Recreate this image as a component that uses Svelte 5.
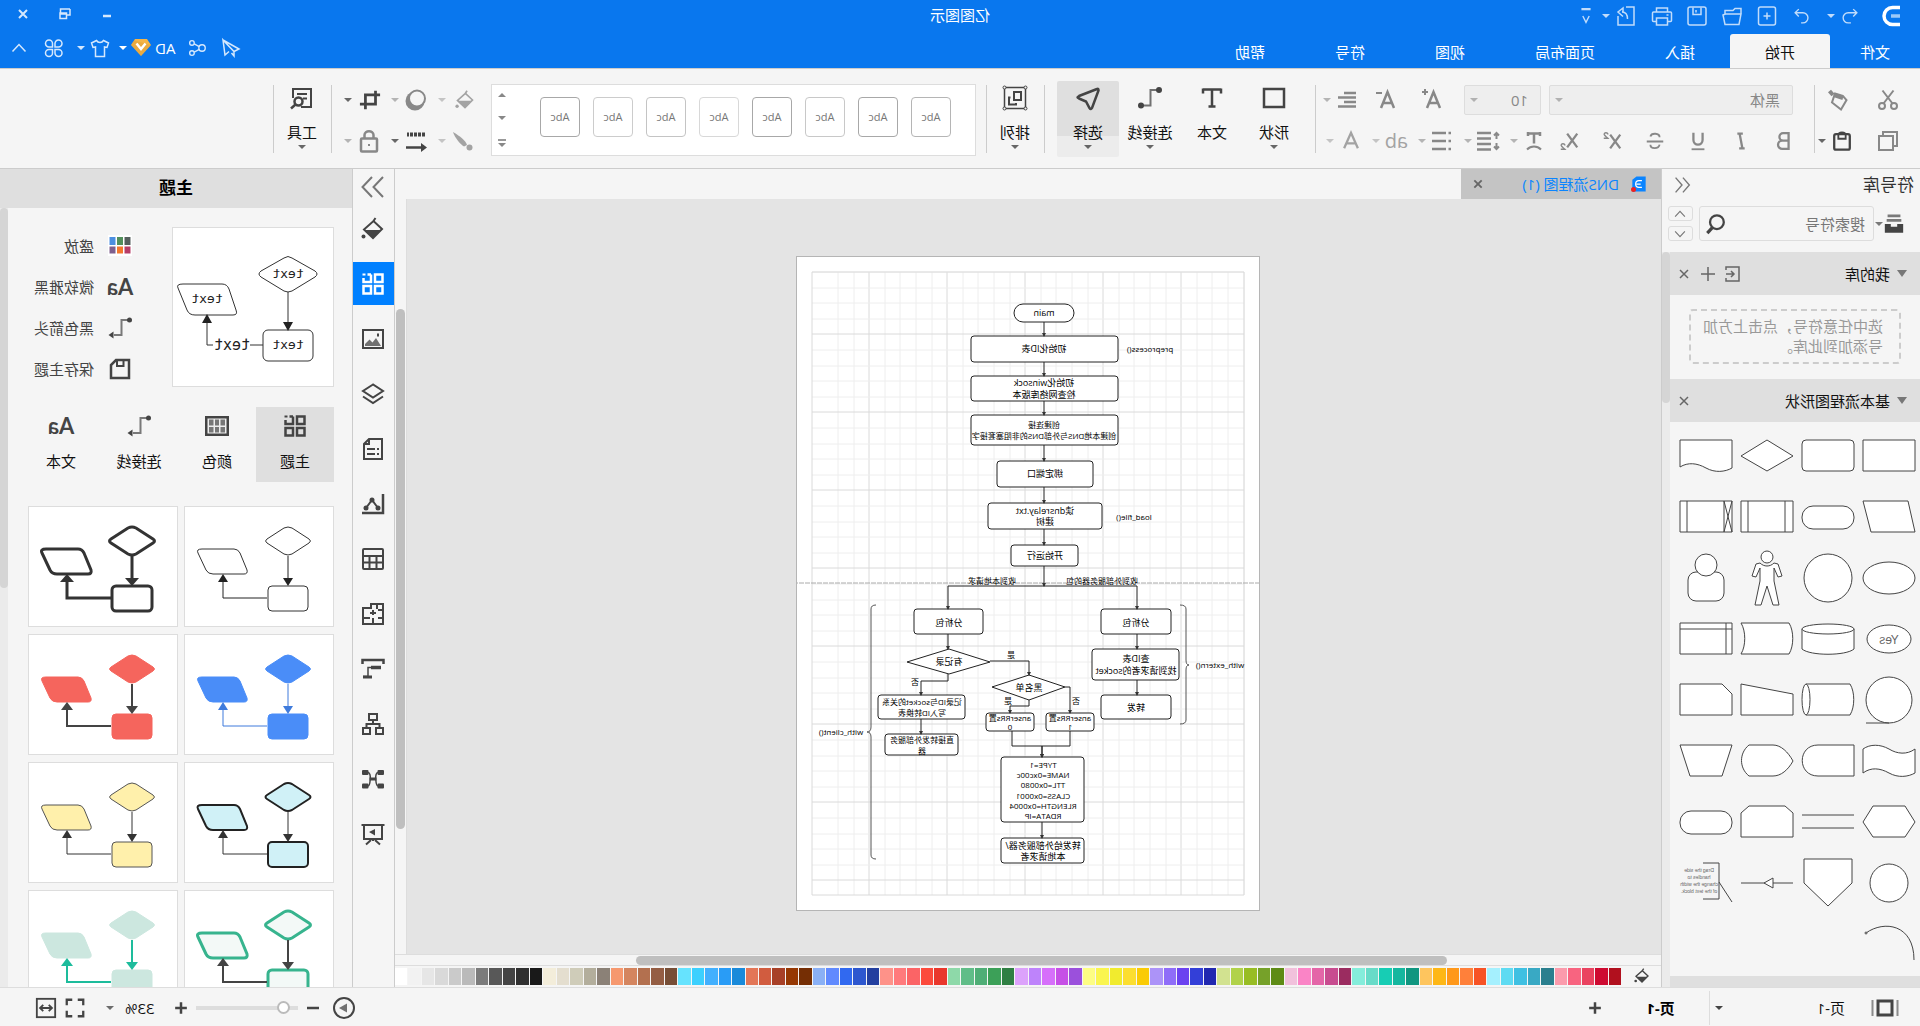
<script>
  const icons = {
    logo: '<path d="M20 3.5h-7.500a8.500 8.500 0 0 0 0 17H20" transform="matrix(-1 0 0 1 24 0)" stroke-width="3.500"/><path d="M4 12h9" stroke-width="3.500" opacity=".6"/>',
    undo: '<path d="M8.500 4.500 4.500 8.500l4 4M4.500 8.500H14a5.500 5.500 0 0 1 0 11h-3"/>',
    redo: '<path d="M15.500 4.500l4 4-4 4M19.500 8.500H11a5.500 5.500 0 0 0 0 11h2"/>',
    new: '<rect x="3.500" y="3" width="17" height="18" rx="2"/><path d="M12 8.500v7M8.500 12h7"/>',
    folder: '<path d="M3 10V4.500h6l2 2h8V10M3 10h15.500l2.500 1-2 9.500H5z"/>',
    save: '<rect x="3" y="3" width="18" height="18" rx="2"/><path d="M8 3.500v7h8v-7M13 6v2.500"/>',
    print: '<path d="M6.500 8V4h11v4M6 17.500H3.500a1 1 0 0 1-1-1V9a1 1 0 0 1 1-1h17a1 1 0 0 1 1 1v7.500a1 1 0 0 1-1 1H18M6.500 14h11v7h-11zM5.500 11h2"/>',
    export: '<path d="M12 3H4v18h16v-9M15 7.500V4l5 4-5 4.500M16 8c-4 0-5.500 3-5.500 7"/>',
    more: '<path d="M7 4.500h10" stroke-width="2.500"/><path d="m8.500 12 3.500 7 3.500-7"/>',
    send: '<path d="M20 4 4 13l5 2.500L20 4l-2 15-4-3.500M9 15.500V20l2.500-3"/>',
    share: '<circle cx="6.500" cy="12" r="3.500"/><circle cx="17.500" cy="6.500" r="2.500"/><circle cx="17.500" cy="17.500" r="2.500"/><path d="m9.500 10.500 5.500-3M9.500 13.500l5.500 3"/>',
    gem: '<path d="M6 3h12l4 6-10 11L2 9z" fill="#f5b547" stroke="none"/><path d="m2 9 10 11L22 9l-3-4.500z" fill="#d99a34" stroke="none" opacity=".4"/><path d="m7.500 7.500 4.500 5.500 4.500-5.500" stroke="#fff" stroke-width="2.500"/>',
    shirt: '<path d="M8.500 4.500 3.500 7l1.500 4.500 2.500-.500v9.500h9V11l2.500.500L20.500 7l-5-2.500c-1.500 2.500-5.500 2.500-7 0z"/>',
    apps: '<path d="M11 11H7.500A3.500 3.500 0 1 1 11 7.500zM13.500 11V7.500A3.500 3.500 0 1 1 17 11zM11 13.500V17a3.500 3.500 0 1 1-3.500-3.500zM13.500 13.500H17a3.500 3.500 0 1 1-3.500 3.500z"/>',
    up: '<path d="m5.500 15.500 6.500-7 6.500 7"/>',
    min: '<path d="M8 14h8" stroke-width="2.500"/>',
    restore: '<path d="M7 7h9.500v4M7 7v6h3.500M10.500 11H17v5.500h-6.500zM10.500 12H17" stroke-width="1.500"/>',
    close: '<path d="m8 8 8 8M16 8l-8 8"/>',
    cut: '<circle cx="6" cy="18" r="3"/><circle cx="18" cy="18" r="3"/><path d="M7.500 15.500 17.500 2.500M16.500 15.500 6.500 2.500"/>',
    painter: '<path d="m7 8 8-2.500 3 9-9 7L3.500 12z"/><path d="m17 7 3.500-4" stroke-width="4"/><path d="m7 10 9-3" stroke-width="4"/>',
    copy: '<path d="M6 17H3V3h14v3"/><rect x="7" y="7" width="14" height="14"/>',
    paste: '<rect x="3.500" y="4.500" width="17" height="17" rx="2" stroke-width="2.500"/><path d="M8 5.500c0-4 8-4 8 0v4H8z" stroke-width="2"/>',
    aplus: '<path d="m3 20 6.500-16L16 20M5.500 15h8" stroke-width="2.500"/><path d="M15 4h6M18 1v6" stroke-width="2"/>',
    aminus: '<path d="m3 20 6.500-16L16 20M5.500 15h8" stroke-width="2.500"/><path d="M15 5h6" stroke-width="2"/>',
    align: '<path d="M3 5h12M3 9.500h18M3 14h12M3 18.500h18" stroke-width="2.500"/>',
    b: '<path d="M7 3.500h6a4 4 0 0 1 0 8H7zM7 11.500h7a4.500 4.500 0 0 1 0 9H7z" stroke-width="2.500"/>',
    i: '<path d="M10 4h6M8 20h6M13.500 4l-3 16" stroke-width="2.500"/>',
    u: '<path d="M7 3v8a5 5 0 0 0 10 0V3" stroke-width="2.500"/><path d="M5 21h14"/>',
    s: '<path d="M17 7c-1-4-10-4-10 1M7 16c1 5 10 5 10 0M3 12.500h18"/>',
    sup: '<path d="m3 5 11 15M14 5 3 20" stroke-width="2.500"/><path d="M16.500 5c0-3 4.500-2.500 4 0-.500 1.500-2.500 2.500-4 4h4.500" stroke-width="1.500"/>',
    sub: '<path d="m3 4 11 15M14 4 3 19" stroke-width="2.500"/><path d="M16.500 17c0-3 4.500-2.500 4 0-.500 1.500-2.500 2.500-4 4h4.500" stroke-width="1.500"/>',
    tcurve: '<path d="M6 4.500h12M12 4.500v10M6 3v4M18 3v4" stroke-width="2.500"/><path d="M5 20.500c4-4 10-4 14 0"/>',
    spacing: '<path d="M3.500 4v6M3.500 14v6M1 6.500 3.500 4 6 6.500M1 17.500 3.500 20 6 17.500"/><path d="M9 4h14M9 9.500h14M9 15h14M9 20.500h14" stroke-width="2.500"/>',
    bullets: '<path d="M8 4h14M8 12h14M8 20h14M3 4h2.500M3 12h2.500M3 20h2.500" stroke-width="2.500"/>',
    acolor: '<path d="m4.500 20 7.500-17 7.500 17M7 14.500h10" stroke-width="2.500"/>',
    shape: '<rect x="2" y="3" width="20" height="18" stroke-width="2.500"/>',
    text: '<path d="M3 3.500h18M12 3.500v17M3 2.500v5M21 2.500v5M8.500 20.500h7" stroke-width="2.500"/>',
    connector: '<path d="M3 4h8.500v15.500H20" opacity=".75"/><circle cx="3" cy="4" r="3" fill="currentColor" stroke="none"/><circle cx="21" cy="19.500" r="3" fill="currentColor" stroke="none"/>',
    arrowconn: '<path d="M2 4h8.500v15H18" opacity=".7"/><circle cx="2.500" cy="4" r="2.500" fill="currentColor" stroke="none"/><path d="M18.500 15.500v7l5-3.500z" fill="currentColor" stroke="none"/>',
    select: '<path d="M3 3 21 10c2 1 2 1.500 0 2.500l-7 3-3.500 6.500c-1 1.500-2 1-2.500 0L1.500 4.500C1.500 3 2 2.500 3 3z" stroke-width="2.500"/>',
    arrange: '<rect x="1.500" y="1.500" width="21" height="21" stroke-width="1.500"/><path d="M6 6h7v8H6zM16.500 11.500h1.500v7h-7v-1.500" stroke-width="2"/><g fill="#f5f5f5" stroke-width="1"><circle cx="1.500" cy="1.500" r="1.500"/><circle cx="22.500" cy="1.500" r="1.500"/><circle cx="1.500" cy="22.500" r="1.500"/><circle cx="22.500" cy="22.500" r="1.500"/></g>',
    bucket: '<path d="m3 12 8.500-8L21 12.500 12 21z" stroke-width="2"/><path d="M4 13h16.500L12 21z" fill="currentColor" stroke="none"/><path d="m11.500 4-2-3" stroke-width="2"/><circle cx="21.500" cy="19.500" r="2" fill="currentColor" stroke="none"/>',
    shadow: '<circle cx="13" cy="13" r="9.500" fill="currentColor" stroke="none"/><circle cx="11" cy="10.500" r="8" fill="#f5f5f5"/>',
    crop: '<path d="M6 2v14.500h17M1 6.500h16V22" stroke-width="3"/>',
    brush: '<path d="M22 3C15 7 9 12 8 16l3 1.500C15 15 20 9 22 3z" fill="currentColor" stroke="none"/><circle cx="5.500" cy="18.500" r="3" fill="currentColor" stroke="none"/>',
    linestyle: '<path d="M3 5.500h18" stroke-width="4" stroke-dasharray="3 1"/><path d="M5 18.500h17" stroke-width="2.500"/><path d="M7 14v9l-6-4.500z" fill="currentColor" stroke="none"/>',
    lock: '<rect x="4" y="9.500" width="16" height="13" rx="1" stroke-width="2.500"/><path d="M7.500 9V6c0-5 9-5 9 0v3" stroke-width="2.500"/><path d="M11 16h2"/>',
    tools: '<path d="M13 21H3V3h18v9M7 8h10M7 12.500h4" stroke-width="2"/><circle cx="15.500" cy="15.500" r="4" fill="#f5f5f5" stroke-width="2.500"/><path d="m18.500 18.500 4.500 4" stroke-width="2.500"/>',
    dbl: '<path d="M11 4 4 12l7 8M19 4l-7 8 7 8"/>',
    dblr: '<path d="m2 2 9.500 10L2 22M13 2l9.500 10L13 22" stroke-width="2"/>',
    lib: '<path d="M5 3h14M4 8h16" stroke-width="3" opacity=".7"/><path d="M2 12h6.500v3h7v-3H22v9.500H2z" fill="currentColor" stroke="none"/>',
    search: '<circle cx="11" cy="10" r="7.500" stroke-width="2.500"/><path d="m16 16 5.500 6" stroke-width="3.500"/>',
    import: '<path d="M18 8V5H5v14h13v-3M18 12h-8M13 9l-3 3 3 3" stroke-width="1.500"/>',
    plus: '<path d="M5 12h14M12 5v14"/>',
    themes: '<path d="M2.500 2.500H10V10H2.500zM14 2.500h3.500M14 2.500V10h7.500V6M2.500 14H10v7.500H2.500zM14 14h7.500v7.500H14z" stroke-width="2.500"/><path d="M19.500 2.500h3" stroke-width="2"/>',
    image: '<rect x="2" y="3" width="20" height="18"/><path d="m4 19 5-8 3.500 4.500 3-3L20 17v2z" fill="currentColor" stroke="none" opacity=".75"/><path d="M7 6.500v3" stroke-width="2"/>',
    layers: '<path d="m12 2.500 10 6.500-10 6.500L2 9zM2 14.500l10 6.500 10-6.500"/>',
    doc: '<path d="M3 2h13l5 5v15H3z"/><path d="M16 2v5h5" stroke-width="2"/><path d="M6 12h2M6 17h2M10 12h8M10 17h8" stroke-width="2"/>',
    chart: '<path d="M2 2v19h21" stroke-width="2.500"/><path d="m7 16 6-8 6 8"/><g fill="currentColor" stroke="none"><circle cx="7" cy="16" r="2.500"/><circle cx="13" cy="8" r="2.500"/><circle cx="19" cy="16" r="2.500"/></g>',
    table: '<rect x="2" y="2" width="20" height="20" rx="1"/><path d="M2 9h20M2 15.500h20M8.500 9v13M15.500 9v13"/>',
    floor: '<path d="M2 2h12v4h8v16H2zM2 8h5M8 2v5M12 22v-6M2 16h5M12 8v5M9 11h6M15 16h7"/>',
    gantt: '<path d="M1.500 7V3h21v4" stroke-width="2.500"/><path d="M4 10.500h10" stroke-width="3.500"/><path d="M14 10.500h3v9h5" stroke-width="1.500"/><path d="M12 20h10" stroke-width="3" stroke-dasharray="0 1 9"/>',
    org: '<path d="M8 2h8v6H8zM2 16h7v6H2zM15 16h7v6h-7zM12 8v4M5.500 15v-3h13v3"/>',
    mind: '<g fill="currentColor" stroke="none"><rect x="1" y="3" width="6.500" height="5" rx="1"/><rect x="16.500" y="3" width="6.500" height="5" rx="1"/><rect x="1" y="16.500" width="6.500" height="5" rx="1"/><rect x="16.500" y="16.500" width="6.500" height="5" rx="1"/></g><path d="M7 5.500c4 0 2 13.500 0 13.500M17 5.500c-4 0-2 13.500 0 13.500" stroke-width="1.500"/><path d="M8.500 12h7" stroke-width="3"/>',
    present: '<path d="M.500 3h23M3 3v14h18V3M12 17v2M10 18l-5 4.500M14 18l5 4.500"/><path d="M10 7v6.500l6-3.500z" fill="currentColor" stroke="none"/>',
    swatches: '<path d="M0 1h24v21H0z" fill="#fff" stroke="none"/><g stroke="none"><path d="M1.500 3h6v8h-6z" fill="#555f5d"/><path d="M9 3h6v8H9z" fill="#528f5b"/><path d="M16.500 3h6v8h-6z" fill="#4c8fe0"/><path d="M1.500 12.500h6v7h-6z" fill="#b73d66"/><path d="M9 12.500h6v7H9z" fill="#f4772c"/><path d="M16.500 12.500h6v7h-6z" fill="#7f5f8d"/></g>',
    disk: '<path d="M3 3h13l5 5v13H3z" stroke-width="2.500"/><path d="M8.500 3v6H15V3"/>',
    colors: '<rect x="0" y="2" width="24" height="20" fill="currentColor" stroke="none"/><path d="M2.500 4.500h19v15h-19z" fill="#eee" stroke="none"/><path d="M4 5.500h4.500v6H4zM10 5.500h4v6h-4zM15.500 5.500H20v6h-4.500zM4 13h4.500v5.500H4zM10 13h4v5.500h-4zM15.500 13H20v5.500h-4.500z" fill="#777" stroke="none"/>',
    pages: '<path d="M5 5h14v14H5z" stroke-width="3"/><path d="M-.500 4v16M24.500 4v16" stroke-width="2" opacity=".6"/>',
    play: '<circle cx="12" cy="12" r="10"/><path d="m9 7.500 8 4.500-8 4.500z" fill="currentColor" stroke="none" opacity=".75"/>',
    minus: '<path d="M6 12h12" stroke-width="2.500"/>',
    fullscreen: '<path d="M3 9V3h6M15 3h6v6M21 15v6h-6M9 21H3v-6" stroke-width="2.500"/>',
    fit: '<rect x="2" y="2" width="20" height="20"/><path d="M7 12h10M9 8.500 5.500 12 9 15.500M15 8.500l3.500 3.500-3.500 3.500" stroke-width="2"/>',
    docfile: '<path d="M4 3h11l5 4v14H4z" fill="#0a84ff" stroke="none"/><path d="M15.500 8H12a4 4 0 0 0 0 8h3.500M9 12h5" stroke="#fff" stroke-width="1.500" transform="matrix(-1 0 0 1 24 0)"/>'
  };

  const menus = ['文件', '开始', '插入', '页面布局', '视图', '符号', '帮助'];
  const formatRow = [['b', '加粗'], ['i', '斜体'], ['u', '下划线'], ['s', '删除线'], ['sup', '上标'], ['sub', '下标']];
  const formatDrops = [['tcurve', '文字弧形'], ['spacing', '行距'], ['bullets', '项目符号']];
  const insertTools = [['shape', '形状', true], ['text', '文本', false], ['connector', '连接线', true], ['select', '选择', true]];
  const styleTones = ['#b5b5b5', '#a8a8a8', '#c8c8c8', '#a8a8a8', '#d8d8d8', '#c4c4c4', '#cccccc', '#a8a8a8'];
  const rail = ['bucket', 'themes', 'image', 'layers', 'doc', 'chart', 'table', 'floor', 'gantt', 'org', 'mind', 'present'];
  const railNames = ['填充', '主题', '图片', '图层', '页面', '图表', '表格', '平面图', '甘特图', '组织结构', '思维导图', '演示'];

  const palette = ('B1101E CE0A31 EA4360 F86480 FB9BAC 2A7F8E 39A9C4 3FC0E2 5FDBF2 A5F0FE F75325 FF803A FF981A FEB716 FEC55E ' +
    '109680 15B79F 17CDB4 68DBC8 85EDDB 9B2C60 C84C90 E466A8 FA84C6 F1C1DC 5E8B15 76A129 98BD24 B1D24A D2E290 ' +
    '2128B0 333FD8 6B42F0 8F6DF8 AC93F8 FACB05 FCDE30 F1EB2E FAF54F FDFD84 9B50DC C64FE6 D66FFA BE83FB DCA2FB ' +
    '2F7F43 3CA058 4FAE76 60BD88 8ED9A9 E9372C FC4A3C FB6466 FF7A7C FE9289 233F9F 2D57CF 3169F0 618AFE 8AB0F5 ' +
    '752E04 963803 A84027 D15C3F E37657 198ADA 299CF6 42B0FE 3CD0FE 66E3FE 774E36 945D43 B3704F D4855F F6986E ' +
    '8B8177 B3AE9C CFCCB9 E4DECF F3EDDA 191919 303030 444444 585858 7B7B7B BABABA CACACA D9D9D9 E6E6E6 F2F2F2 FFFFFF').split(' ');

  const symbols = [
    '<path d="M-26-16h52v31h-52z"/>',
    '<rect x="-26" y="-16" width="52" height="31" rx="4"/>',
    '<path d="M-26 0 0-16 26 0 0 15z"/>',
    '<path d="M-26-16h52v27c-8-5-17-4-26 1-9 5-19 4-26 0z"/>',
    '<path d="M-19-16h45l-8 31h-44z"/>',
    '<rect x="-26" y="-11" width="52" height="23" rx="11"/>',
    '<path d="M-26-16h52v31h-52zM-18-16v31M19-16v31"/>',
    '<path d="M-26-16h52v31h-52zM-18-16v31M19-16v31M-26-16l8 31M-18-16l-8 31"/>',
    '<ellipse rx="26" ry="16"/>',
    '<circle r="24"/>',
    '<circle cy="-21" r="6"/><path d="M-7-15c4 4 10 4 14 0l4 1 4 12-4 1-4-9 0 13 5 24h-6L0 8l-6 19h-6l5-24v-13l-4 9-4-1 4-12z"/>',
    '<rect x="-18" y="-6" width="36" height="29" rx="8"/><circle cy="-13" r="11"/>',
    '<ellipse rx="22" ry="14"/><text y="5" font-size="12">Yes</text>',
    '<path d="M-26-10v20c8 7 44 7 52 0v-20"/><ellipse cy="-10" rx="26" ry="5"/>',
    '<path d="M-22-16h48c-5 8-5 23 0 31h-48c-5-8-5-23 0-31z"/>',
    '<path d="M-26-16h52v31h-52zM-20-16v31M-26-10h52"/>',
    '<circle r="23"/><path d="M0 23h23"/>',
    '<path d="M22-16h-44c-5 8-5 23 0 31h44"/><ellipse cx="22" cy="-.500" rx="4" ry="15.500"/>',
    '<path d="M-26-6 26-16v31h-52z"/>',
    '<path d="M-16-16h42v31h-52V-6z"/>',
    '<path d="M-26-12c8 6 18 5 26 0 9-5 19-5 26 0v24c-8-6-17-5-26 0-9 5-19 4-26 0z"/>',
    '<path d="M-26-16H10c21 0 21 31 0 31h-36z"/>',
    '<path d="M-26 0c5-9 12-16 20-16h24c10 8 10 23 0 31H-6c-8 0-15-6-20-15z"/>',
    '<path d="M-26-16h52l-10 31h-32z"/>',
    '<path d="M-26 0l10-16h32L26 0 16 15h-32z"/>',
    '<path d="M-26-7h52M-26 6h52"/>',
    '<path d="M-18-16h36l8 7v24h-52V-9z"/>',
    '<rect x="-26" y="-11" width="52" height="23" rx="11"/>',
    '<circle r="19"/>',
    '<path d="M-24-24h48V0L0 23-24 0z"/>',
    '<path d="M-26 0h52"/><path d="M-6-5v10l9-5z"/>',
    '<path d="M3-20h-16v36H3M-13-1l-13 20" fill="none"/><text x="7" y="-11" font-size="5">Drag the side</text><text x="7" y="-4" font-size="5">handles to</text><text x="7" y="3" font-size="5">change the width</text><text x="7" y="10" font-size="5">of the text block.</text>',
    '<path d="M-25 16c0-36 30-40 48-27" fill="none"/><circle cx="23" cy="-11" r="1"/>'
  ];

  const themes = [
    { f: '#fff', s: '#333', w: 1, a: '#222', l: 1 },
    { f: '#fff', s: '#333', w: 3, a: '#333', l: 3 },
    { f: '#4a8df8', s: '#4a8df8', w: 1, a: '#3f7bdc', l: 1 },
    { f: '#f5655d', s: '#f5655d', w: 1, a: '#444', l: 2 },
    { f: '#d0f1f7', s: '#222', w: 2, a: '#333', l: 1 },
    { f: '#fff0ab', s: '#555', w: 1, a: '#333', l: 1 },
    { f: '#f3f9f7', s: '#37b48e', w: 3, a: '#444', l: 2 },
    { f: '#cce7df', s: '#cce7df', w: 1, a: '#1dbc9c', l: 2 }
  ];

  const gridX = Array.from({ length: 27 }, (_, k) => ({ p: Math.round(16.4 + 15.6 * k), major: k % 5 === 4 }));
  const gridY = Array.from({ length: 40 }, (_, k) => ({ p: Math.round(16 + 15.6 * k), major: k % 5 === 4 }));

  const boxes = [
    [142, 80, 147, 26], [142, 120, 147, 25], [142, 159, 147, 30], [167, 205, 96, 26], [158, 247, 114, 26], [182, 289, 67, 21],
    [277, 353, 69, 25], [89, 353, 70, 25], [81, 393, 87, 31], [89, 439, 70, 24], [295, 439, 87, 24], [302, 478, 73, 21],
    [226, 457, 48, 18], [166, 457, 48, 18], [176, 501, 83, 65], [176, 582, 83, 25]
  ];
  const arrows = [
    'M216 66V80', 'M216 106V120', 'M216 145V159', 'M216 189V205', 'M216 231V247', 'M216 273V289', 'M216 310V330',
    'M216 330H312V353', 'M216 330H123V353', 'M312 378V393', 'M123 378V393', 'M123 424V439',
    'M270 405H231V419', 'M312 418V425H339V439', 'M339 463V478', 'M231 444V450H250V457', 'M195 431H190V457',
    'M248 475V490H218V501', 'M190 475V490H218V501', 'M218 566V582'
  ];
  const labels = [
    [216, 57, 'main', 9], [216, 93, '初始化ID表', 9], [216, 127, '初始化winsock', 9], [216, 139, '检查网络库版本', 9],
    [216, 169, '创建连接', 8], [216, 180, '创建本地DNS与外部DNS的非阻塞套接字', 8], [215, 218, '绑定端口', 9],
    [215, 255, '读dnsrelay.txt', 9], [215, 266, '建树', 9], [215, 300, '开始运行', 9],
    [110, 93, 'preprocess()', 8], [126, 261, 'load_file()', 8],
    [268, 325, '收到本地请求', 8], [158, 325, '收到外部服务器的包', 8],
    [311, 367, '分析包', 9], [124, 367, '分析包', 9], [124, 403, '查ID表', 9], [124, 415, '找到请求者的socket', 9],
    [124, 452, '转发', 9], [40, 409, 'with_extern()', 8], [311, 406, '有记录', 9], [249, 399, '是', 8],
    [231, 432, '黑名单', 9], [345, 426, '否', 8], [338, 446, '记录ID与socket的关系', 8], [338, 457, '写入ID转换表', 8],
    [338, 484, '直接转发外部服务', 8], [338, 495, '器', 8], [419, 476, 'with_client()', 8],
    [252, 445, '是', 8], [184, 445, '否', 8], [250, 462, 'anserRRs置', 8], [250, 471, '0', 8],
    [190, 462, 'anserRRs置', 8], [190, 471, '1', 8],
    [217, 509, 'TYPE=1', 8], [217, 519, 'NAME=0xc00c', 8], [217, 529, 'TTL=0x0080', 8], [217, 540, 'CLASS=0x0001', 8],
    [217, 550, 'RLENGTH=0x0004', 8], [217, 560, 'RDATA=IP', 8],
    [217, 590, '转发给外部服务器/', 9], [217, 601, '本地请求者', 9]
  ];
</script>

{#snippet icon(name, size = 24)}
  <svg class="ic" viewBox="0 0 24 24" width={size} height={size} aria-hidden="true">{@html icons[name]}</svg>
{/snippet}

{#snippet sample(t)}
  <path d="M41 21q4-2 8 0l17 11q3 2 0 4L49 47q-4 2-8 0L24 36q-3-2 0-4z" fill={t.f} stroke={t.s} stroke-width={t.w} />
  <path d="M99 42h32q6 0 4 4l-8 17q-2 4-7 4H89q-4 0-3-4l7-17q2-4 6-4z" fill={t.f} stroke={t.s} stroke-width={t.w} />
  <rect x="25" y="79" width="40" height="25" rx="4" fill={t.f} stroke={t.s} stroke-width={t.w} />
  <path d="M45 49v24M66 91h44V72" fill="none" stroke={t.a} stroke-width={t.l} />
  <path d="M{41 - t.l} 71h{8 + 2 * t.l}l-{4 + t.l} 8zM{106 - t.l} 75h{8 + 2 * t.l}l-{4 + t.l}-8z" fill={t.a} />
{/snippet}

<div class="app">
  <header>
    <div class="titlebar">
      <div class="quick">
        <span class="logo">{@render icon('logo')}</span>
        <button class="qa first drop" aria-label="撤销">{@render icon('undo', 22)}<i class="caret"></i></button>
        <button class="qa" aria-label="重做">{@render icon('redo', 22)}</button>
        <button class="qa" aria-label="新建">{@render icon('new', 24)}</button>
        <button class="qa" aria-label="打开">{@render icon('folder', 24)}</button>
        <button class="qa" aria-label="保存">{@render icon('save', 24)}</button>
        <button class="qa" aria-label="打印">{@render icon('print', 24)}</button>
        <button class="qa drop" aria-label="导出">{@render icon('export', 24)}<i class="caret"></i></button>
        <button class="qa more" aria-label="更多">{@render icon('more', 22)}</button>
      </div>
      <h1>亿图图示</h1>
      <div class="win">
        <button aria-label="最小化">{@render icon('min')}</button>
        <button aria-label="还原">{@render icon('restore')}</button>
        <button class="bold" aria-label="关闭">{@render icon('close')}</button>
      </div>
    </div>
    <div class="menubar">
      <nav>
        {#each menus as m, n}
          <button class:active={n === 1} class:file={n === 0}>{m}</button>
        {/each}
      </nav>
      <div class="account">
        <button aria-label="发送">{@render icon('send')}</button>
        <button aria-label="分享">{@render icon('share', 22)}</button>
        <button class="user drop"><span>AD</span>{@render icon('gem')}<i class="caret"></i></button>
        <button class="drop" aria-label="皮肤">{@render icon('shirt')}<i class="caret"></i></button>
        <button aria-label="应用">{@render icon('apps', 24)}</button>
        <button aria-label="收起">{@render icon('up')}</button>
      </div>
    </div>
  </header>

  <div class="ribbon">
    <div class="group clip">
      <div class="row"><button class="tool" aria-label="剪切">{@render icon('cut')}</button><button class="tool paint" aria-label="格式刷">{@render icon('painter')}</button></div>
      <div class="row"><button class="tool" aria-label="复制">{@render icon('copy')}</button><button class="dd dark" aria-label="粘贴">{@render icon('paste', 22)}<i class="caret"></i></button></div>
    </div>
    <div class="group font">
      <div class="row pick">
        <label class="pickbox family"><select aria-label="字体"><option>黑体</option></select><i class="caret"></i></label>
        <label class="pickbox size"><select aria-label="字号"><option>10</option></select><i class="caret"></i></label>
        <button class="tool" aria-label="增大字号">{@render icon('aplus')}</button>
        <button class="tool wide" aria-label="减小字号">{@render icon('aminus')}</button>
        <button class="dd" aria-label="对齐">{@render icon('align')}<i class="caret"></i></button>
      </div>
      <div class="row">
        {#each formatRow as [n, t]}<button class="fmt" aria-label={t}>{@render icon(n, 22)}</button>{/each}
        {#each formatDrops as [n, t]}<button class="dd" aria-label={t}>{@render icon(n)}<i class="caret"></i></button>{/each}
        <button class="dd pale" aria-label="突出显示"><span class="ab">ab</span><i class="caret"></i></button>
        <button class="dd pale" aria-label="字体颜色">{@render icon('acolor', 22)}<i class="caret"></i></button>
      </div>
    </div>
    <div class="group big insert">
      {#each insertTools as [n, t, c]}
        <button class="bigtool" class:on={n === 'select'}>{@render icon(n)}<span>{t}</span>{#if c}<i class="caret"></i>{/if}</button>
      {/each}
    </div>
    <div class="group big one"><button class="bigtool">{@render icon('arrange')}<span>排列</span><i class="caret"></i></button></div>
    <div class="group styles">
      <div class="gallery">
        {#each styleTones as tone}<button class="style" style:border-color={tone}>Abc</button>{/each}
        <div class="gscroll"><button aria-label="上一行"><i class="caret flip"></i></button><button aria-label="下一行"><i class="caret"></i></button><button aria-label="全部样式" class="all"><i class="caret"></i></button></div>
      </div>
    </div>
    <div class="group effects">
      <div class="row"><button class="dd pale" aria-label="填充">{@render icon('bucket', 20)}<i class="caret"></i></button><button class="dd" aria-label="阴影">{@render icon('shadow')}<i class="caret"></i></button><button class="dd dark" aria-label="裁剪">{@render icon('crop', 22)}<i class="caret"></i></button></div>
      <div class="row"><button class="dd pale" aria-label="线条">{@render icon('brush')}<i class="caret"></i></button><button class="dd dark" aria-label="线型">{@render icon('linestyle')}<i class="caret"></i></button><button class="dd" aria-label="锁定">{@render icon('lock')}<i class="caret"></i></button></div>
    </div>
    <div class="group big one"><button class="bigtool">{@render icon('tools')}<span>工具</span><i class="caret"></i></button></div>
  </div>

  <main>
    <aside class="library">
      <div class="libhead"><h2>符号库</h2><button aria-label="收起符号库">{@render icon('dbl', 22)}</button></div>
      <div class="find">
        <button class="libbtn" aria-label="符号库菜单">{@render icon('lib', 22)}<i class="caret"></i></button>
        <div class="searchbox"><input type="text" aria-label="搜索符号" placeholder="搜索符号" /><button aria-label="搜索">{@render icon('search', 22)}</button></div>
        <div class="updown"><button aria-label="上">{@render icon('up', 18)}</button><button aria-label="下" class="down">{@render icon('up', 18)}</button></div>
      </div>
      <div class="libscroll">
        <div class="liblist">
          <div class="sect"><i class="tri"></i><h3>我的库</h3><button aria-label="导入">{@render icon('import')}</button><button aria-label="添加">{@render icon('plus')}</button><button aria-label="关闭我的库">{@render icon('close')}</button></div>
          <div class="hint"><p>选中任意符号，点击上方加号添加到此库。</p></div>
          <div class="sect"><i class="tri"></i><h3>基本流程图形状</h3><button aria-label="关闭形状">{@render icon('close')}</button></div>
          <div class="shapes">
            {#each symbols as s}<svg viewBox="-30 -30 61 61" width="61" height="61">{@html s}</svg>{/each}
          </div>
          <div class="sect last"></div>
        </div>
        <div class="track"><div class="thumb libthumb"></div></div>
      </div>
    </aside>

    <section class="work">
      <div class="doctabs"><div class="doctab">{@render icon('docfile', 20)}<i class="dot"></i><span>DNS流程图 (1)</span><button aria-label="关闭文档">{@render icon('close', 22)}</button></div></div>
      <div class="viewport">
        <div class="canvas">
          <svg class="page" viewBox="0 0 464 655" width="464" height="655">
            <defs><marker id="tip" viewBox="0 0 4 4" refX="3" refY="2" markerWidth="4" markerHeight="4" orient="auto"><path d="M0 0l4 2-4 2z" fill="#333" /></marker></defs>
            <g class="grid">
              {#each gridX as g}<path class:major={g.major} d="M{g.p} 16V639" />{/each}
              {#each gridY as g}<path class:major={g.major} d="M16 {g.p}H448" />{/each}
              <path class="major" d="M16 16H448V639H16z" />
            </g>
            <path d="M0 327H464" stroke="#aaa" stroke-dasharray="5 1" />
            <g class="nodes">
              <rect x="186" y="48" width="60" height="18" rx="9" />
              {#each boxes as [x, y, w, h]}<rect {x} {y} width={w} height={h} rx="3" />{/each}
              <path d="M270 406l41-13 42 13-42 12zM195 431l36-12 37 12-37 13z" />
            </g>
            <g class="links">{#each arrows as d}<path {d} marker-end="url(#tip)" />{/each}</g>
            <g class="braces"><path d="M80 349q-6 0-6 4v51q0 5-3 5 3 0 3 5v50q0 4 6 4M384 349q5 0 5 4v118q0 5 4 5-4 0-4 5v118q0 4-5 4" /></g>
            <g class="words">{#each labels as [x, y, t, z]}<text {x} y={y + 3} font-size={z}>{t}</text>{/each}</g>
          </svg>
        </div>
        <div class="vbar"><div class="vthumb"></div></div>
      </div>
      <div class="hbar"><div class="hthumb"></div></div>
      <div class="palette"><span class="pot">{@render icon('bucket', 16)}</span>{#each palette as c}<button aria-label={'#' + c} style:background={'#' + c}></button>{/each}</div>
    </section>

    <nav class="rail">
      <button class="fold" aria-label="收起面板">{@render icon('dblr')}</button>
      {#each rail as r, n}<button class:active={n === 1} aria-label={railNames[n]}><span>{@render icon(r)}</span></button>{/each}
    </nav>

    <aside class="theme">
      <h2>主题</h2>
      <div class="themescroll">
        <div class="themebody">
          <div class="current">
            <svg viewBox="0 0 162 160" width="162" height="160">
              <g fill="#fff" stroke="#333">
                <path d="M42 31q4-3 8 0l23 13q4 3 0 6L50 64q-4 2-8 0L19 50q-4-3 0-6z" />
                <path d="M112 57h39q7 0 5 4l-9 22q-2 5-8 5h-38q-5 0-3-5l7-21q2-5 7-5z" />
                <rect x="21" y="103" width="50" height="31" rx="5" />
                <path d="M46 65v31M71 118h13M121 118h6V95" fill="none" />
              </g>
              <path d="M41 95h10l-5 9zM122 96h10l-5-9z" fill="#222" />
              <text x="46" y="51" font-size="13">text</text><text x="127" y="76" font-size="13">text</text>
              <text x="46" y="122" font-size="13">text</text><text x="102" y="123" font-size="15">text</text>
            </svg>
            <ul>
              <li>{@render icon('swatches')}<span>盛放</span></li>
              <li><b class="aa">Aa</b><span>微软雅黑</span></li>
              <li>{@render icon('arrowconn')}<span>黑色箭头</span></li>
              <li>{@render icon('disk')}<span>保存主题</span></li>
            </ul>
          </div>
          <div class="kinds">
            <button class="on">{@render icon('themes')}<span>主题</span></button>
            <button>{@render icon('colors')}<span>颜色</span></button>
            <button>{@render icon('arrowconn')}<span>连接线</span></button>
            <button><b class="aa">Aa</b><span>文本</span></button>
          </div>
          <div class="cards">
            {#each themes as t, n}<button class="card" aria-label={'主题 ' + (n + 1)}><svg viewBox="0 0 148 119" width="148" height="119">{@render sample(t)}</svg></button>{/each}
          </div>
        </div>
        <div class="track"><div class="thumb themethumb"></div></div>
      </div>
    </aside>
  </main>

  <footer>
    <div class="pagepick"><button aria-label="页面列表">{@render icon('pages')}</button><label><select aria-label="页面"><option>页-1</option></select><i class="caret"></i></label></div>
    <button class="pagetab">页-1</button>
    <button class="addpage" aria-label="添加页面">{@render icon('plus', 20)}</button>
    <div class="zoom">
      <button aria-label="演示">{@render icon('play')}</button>
      <button aria-label="缩小">{@render icon('minus')}</button>
      <input type="range" min="0" max="100" value="8" aria-label="缩放" />
      <button aria-label="放大" class="thick">{@render icon('plus', 20)}</button>
      <button class="percent"><span>33%</span><i class="caret"></i></button>
      <button aria-label="全屏">{@render icon('fullscreen', 22)}</button>
      <button aria-label="适合宽度">{@render icon('fit', 22)}</button>
    </div>
  </footer>
</div>

<style>
  :global(body) { overflow: hidden; }
  .app { display: flex; flex-direction: column; height: 100vh; overflow: hidden; background: #f5f5f5; color: #333; font: 15px/20px "Open Sans", "Noto Sans CJK SC", sans-serif; transform: scaleX(-1); }
  .app :is(button, select, input) { font: inherit; color: inherit; border: 0; padding: 0; margin: 0; background: none; }
  .app :is(h1, h2, h3, p, ul) { margin: 0; padding: 0; font-size: 15px; font-weight: 400; list-style: none; }
  button { display: flex; align-items: center; justify-content: center; }
  select { appearance: none; outline: 0; }
  .ic { display: block; flex: none; fill: none; stroke: currentColor; stroke-width: 2; overflow: visible; }
  .caret { display: block; flex: none; width: 0; height: 0; border: 4px solid transparent; border-top: 4px solid currentColor; border-bottom: 0; }
  .caret.flip { border-top: 0; border-bottom: 4px solid currentColor; }

  header { background: #0977ee; color: #d5e8fd; flex: none; }
  header .ic { stroke-width: 1.5; }
  .titlebar { display: grid; grid-template-columns: 1fr auto 1fr; height: 34px; align-items: center; }
  .titlebar h1 { color: #fff; line-height: 30px; align-self: start; }
  .quick { display: flex; align-items: center; height: 32px; align-self: start; }
  .logo { color: #fff; padding-left: 16px; width: 36px; }
  .qa { width: 35px; height: 28px; opacity: .9; }
  .app .qa.drop { width: 36px; padding-left: 7px; justify-content: flex-start; gap: 4px; }
  .app .qa.first { width: 48px; }
  .app .more { width: 46px; }
  .win { display: flex; justify-content: flex-end; gap: 18px; padding-right: 11px; align-self: start; height: 27px; }
  .win .bold :global(svg) { stroke-width: 2; }
  .menubar { display: flex; justify-content: space-between; height: 34px; }
  .menubar nav { display: flex; color: #fff; }
  .app .menubar nav button { padding: 1px 35px 0; }
  .app .menubar nav .file { padding: 1px 30px 0; }
  .app .menubar nav .active { background: #f5f5f5; color: #111; border-radius: 3px 3px 0 0; }
  .account { display: flex; align-items: center; gap: 11px; padding: 0 7px 6px 0; }
  .account .drop { gap: 3px; }
  .app .account .user { color: #fff; gap: 2px; margin-right: -4px; }

  .ribbon { display: flex; flex: none; height: 99px; border-top: 1px solid #ccc; border-bottom: 1px solid #ccc; box-sizing: content-box; color: #888; }
  .group { position: relative; padding: 16px 0 0; display: flex; flex-direction: column; gap: 11px; box-sizing: border-box; flex: none; border: 0; }
  .group:not(.styles)::after { content: ""; position: absolute; right: 0; top: 16px; height: 68px; width: 1px; background: #ccc; }
  .row { display: flex; align-items: center; height: 30px; flex: none; }
  .clip { width: 106px; padding-left: 10px; }
  .clip .row { gap: 10px; }
  .tool { width: 44px; height: 28px; }
  .tool.wide { width: 48px; }
  .tool.paint { width: 36px; }
  .dd { width: 46px; height: 28px; }
  .app .dd { justify-content: space-between; padding: 0 8px 0 2px; }
  .app .clip .dd { width: 42px; padding: 0 4px 0 3px; }
  .dd .caret { opacity: .6; }
  .app .dd.dark { color: #444; }
  .dd.dark .caret { opacity: .8; }
  .app .dd.pale { color: #a3a3a3; }
  .font { width: 499px; padding-left: 8px; }
  .fmt { width: 43px; height: 28px; }
  .font .pick { padding-left: 13px; }
  .pickbox { display: flex; align-items: center; box-sizing: border-box; height: 30px; border: 1px solid #ddd; border-radius: 2px; background: #eee; padding: 0 5px 0 12px; }
  .app .pickbox select { flex: 1; min-width: 0; color: #888; }
  .pickbox .caret { opacity: .6; }
  .family { width: 244px; margin-right: 8px; }
  .size { width: 77px; margin-right: 11px; }
  .ab { font-size: 20px; line-height: 20px; }
  .big { flex-direction: row; color: #444; padding-top: 12px; gap: 0; }
  .insert { padding-left: 10px; padding-right: 13px; }
  .one { width: 58px; justify-content: center; }
  .app .bigtool { flex-direction: column; justify-content: flex-start; width: 62px; height: 76px; padding-top: 5px; border-radius: 2px; }
  .app .one .bigtool { width: 56px; }
  .bigtool span { color: #111; margin: 12px 0 3px; line-height: 20px; }
  .app .bigtool.on { background: linear-gradient(#dfdfdf 55px, #ececec 55px); }
  .bigtool .caret { opacity: .8; }
  .styles { padding: 15px 0 0 10px; }
  .gallery { display: flex; align-items: center; gap: 13px; box-sizing: border-box; width: 485px; height: 72px; border: 1px solid #ddd; background: #fff; padding-left: 24px; }
  .app .style { width: 40px; height: 40px; border: 1px solid; border-radius: 4px; font-size: 11px; color: #777; margin-top: -6px; }
  .gscroll { display: flex; flex-direction: column; justify-content: space-between; height: 54px; margin-left: 21px; }
  .app .all { border-top: 2px solid #999; padding-top: 2px; }
  .effects { width: 160px; padding-left: 14px; }
  .effects .dd { width: 47px; }

  main { display: flex; flex: 1; min-height: 0; }
  .library { width: 258px; flex: none; display: flex; flex-direction: column; border-right: 1px solid #ccc; }
  .libhead { display: flex; justify-content: space-between; align-items: center; height: 31px; padding: 0 9px 0 6px; flex: none; color: #777; }
  .library .ic { stroke-width: 1.5; }
  .app .libhead h2 { font-size: 17px; color: #333; }
  .find { display: flex; padding: 6px 6px 11px 13px; color: #444; flex: none; }
  .libbtn { gap: 0; width: 33px; }
  .libbtn .caret { opacity: .7; }
  .searchbox { display: flex; flex: 1; min-width: 0; height: 33px; border: 1px solid #ddd; border-radius: 3px; margin-right: 6px; padding: 0 5px 0 8px; }
  .searchbox input { flex: 1; min-width: 0; outline: 0; }
  .searchbox input::placeholder { color: #777; opacity: 1; }
  .updown { display: flex; flex-direction: column; justify-content: space-between; }
  .app .updown button { width: 25px; height: 15px; box-sizing: border-box; border: 1px solid #ddd; border-radius: 3px; color: #777; }
  .down .ic { rotate: 180deg; }
  .libscroll, .themescroll { display: flex; flex: 1; min-height: 0; }
  .liblist { flex: 1; min-width: 0; overflow: hidden; }
  .track { width: 8px; flex: none; background: #ebebeb; }
  .thumb { background: #d5d5d5; border-radius: 4px; }
  .libthumb { height: 151px; }
  .themethumb { height: 380px; }
  .sect { display: flex; align-items: center; height: 43px; background: #dfdfdf; color: #666; padding: 0 2px 0 13px; }
  .app .sect h3 { flex: 1; color: #111; padding-left: 7px; }
  .sect.last { margin-top: 1px; }
  .tri { border: 5px solid transparent; border-top: 7px solid #777; border-bottom: 0; }
  .hint { margin: 14px 19px 15px; border: 2px dashed #ccc; border-radius: 4px; padding: 5px 12px 6px 16px; color: #999; }
  .shapes { display: grid; grid-template-columns: repeat(4, 61px); padding: 4px 0 0 1px; }
  .shapes svg { fill: #fff; stroke: #444; stroke-width: 1; }
  .shapes :global(text) { fill: #666; stroke: none; text-anchor: middle; font-family: "Liberation Sans", sans-serif; }

  .work { flex: 1; min-width: 0; display: flex; flex-direction: column; }
  .doctabs { height: 30px; flex: none; display: flex; }
  .doctab { position: relative; display: flex; align-items: center; width: 200px; background: #c4c4c4; color: #0a84ff; padding: 0 6px 0 12px; box-sizing: border-box; gap: 10px; }
  .doctab span { flex: 1; white-space: nowrap; }
  .app .doctab button { color: #666; }
  .dot { position: absolute; left: 25px; top: 18px; width: 5px; height: 5px; border-radius: 50%; background: #e22; }
  .viewport { flex: 1; display: flex; min-height: 0; }
  .canvas { flex: 1; min-width: 0; display: flex; justify-content: center; align-items: flex-start; background: #e4e4e4; padding: 57px 0 0 12px; overflow: hidden; }
  .page { background: #fff; outline: 1px solid #b5b5b5; outline-offset: -1px; flex: none; }
  .grid { stroke: #eee; fill: none; }
  .grid .major { stroke: #dadada; }
  .nodes { fill: #fff; stroke: #222; }
  .links, .braces { fill: none; stroke: #222; }
  .braces { stroke: #555; }
  .words { fill: #000; text-anchor: middle; }
  .vbar { width: 12px; padding: 110px 1px 0; box-sizing: border-box; border-left: 1px solid #ddd; }
  .vthumb { height: 520px; background: #bfbfbf; border-radius: 5px; }
  .hbar { height: 12px; flex: none; box-sizing: border-box; border: 1px solid #ddd; border-width: 1px 0; padding: 1px 241px 0 214px; }
  .hthumb { height: 9px; background: #bfbfbf; border-radius: 5px; }
  .palette { display: flex; gap: 1px; height: 17px; padding: 2px 0; flex: none; }
  .palette button { flex: 1; min-width: 0; }
  .pot { width: 28px; padding-left: 11px; color: #444; }

  .rail { width: 41px; flex: none; display: flex; flex-direction: column; border: 1px solid #ccc; border-width: 0 1px; color: #444; }
  .rail button { height: 55px; flex: none; }
  .app .rail .fold { height: 33px; color: #777; padding-top: 2px; box-sizing: border-box; }
  .rail button span { display: flex; align-items: center; justify-content: center; width: 41px; height: 43px; margin-top: -2px; }
  .rail .active span { background: #0080ff; color: #fff; }

  .theme { width: 352px; flex: none; display: flex; flex-direction: column; min-height: 0; }
  .app .theme h2 { height: 39px; flex: none; background: #dfdfdf; color: #000; font-size: 17px; font-weight: 700; text-align: center; line-height: 38px; }
  .themebody { flex: 1; min-width: 0; padding: 19px 20px 0 18px; overflow: hidden; }
  .current { display: flex; color: #444; height: 160px; }
  .current > svg { background: #fff; outline: 1px solid #ddd; outline-offset: -1px; }
  .current text { font-family: "DejaVu Sans Mono", monospace; text-anchor: middle; fill: #222; }
  .app .current ul { padding-left: 40px; margin-top: -2px; }
  .current li { display: flex; align-items: center; gap: 14px; height: 41px; white-space: nowrap; }
  .aa { width: 24px; font: 700 22px/24px Lato, sans-serif; display: flex; justify-content: center; }
  .kinds { display: grid; grid-template-columns: repeat(4, 78px); margin: 20px 0 24px; color: #444; }
  .app .kinds button { flex-direction: column; height: 75px; gap: 13px; padding-bottom: 4px; box-sizing: border-box; }
  .app .kinds .on { background: #dfdfdf; }
  .kinds span { color: #111; }
  .cards { display: grid; grid-template-columns: repeat(2, 150px); gap: 7px 6px; }
  .app .card { border: 1px solid #ddd; background: #fff; }

  footer { display: flex; align-items: center; flex: none; height: 39px; border-top: 1px solid #ddd; color: #444; position: relative; z-index: 1; background: #f5f5f5; padding-top: 1px; box-sizing: border-box; }
  .pagepick { display: flex; align-items: center; width: 211px; height: 34px; border-right: 1px solid #ddd; box-sizing: border-box; padding: 0 5px 0 23px; gap: 28px; }
  .pagepick label { display: flex; flex: 1; align-items: center; }
  .app .pagepick select { flex: 1; min-width: 0; color: #111; }
  .app .pagetab { width: 97px; font-weight: 700; color: #000; }
  .addpage { width: 34px; }
  .addpage .ic, .thick .ic { stroke-width: 3; }
  .zoom { display: flex; align-items: center; margin-left: auto; padding-right: 35px; }
  .zoom button + button { margin-left: 7px; }
  .app input[type="range"] { appearance: none; width: 102px; height: 14px; margin: 0 5px 0 3px; background: linear-gradient(#ddd, #ddd) center / 100% 4px no-repeat; }
  input[type="range"]::-webkit-slider-thumb { appearance: none; width: 13px; height: 13px; border-radius: 50%; border: 2px solid #bbb; background: #fff; box-sizing: border-box; }
  .app .zoom .percent { gap: 11px; margin: 0 13px 0 16px; color: #111; }
  .percent .caret { opacity: .6; }
</style>
